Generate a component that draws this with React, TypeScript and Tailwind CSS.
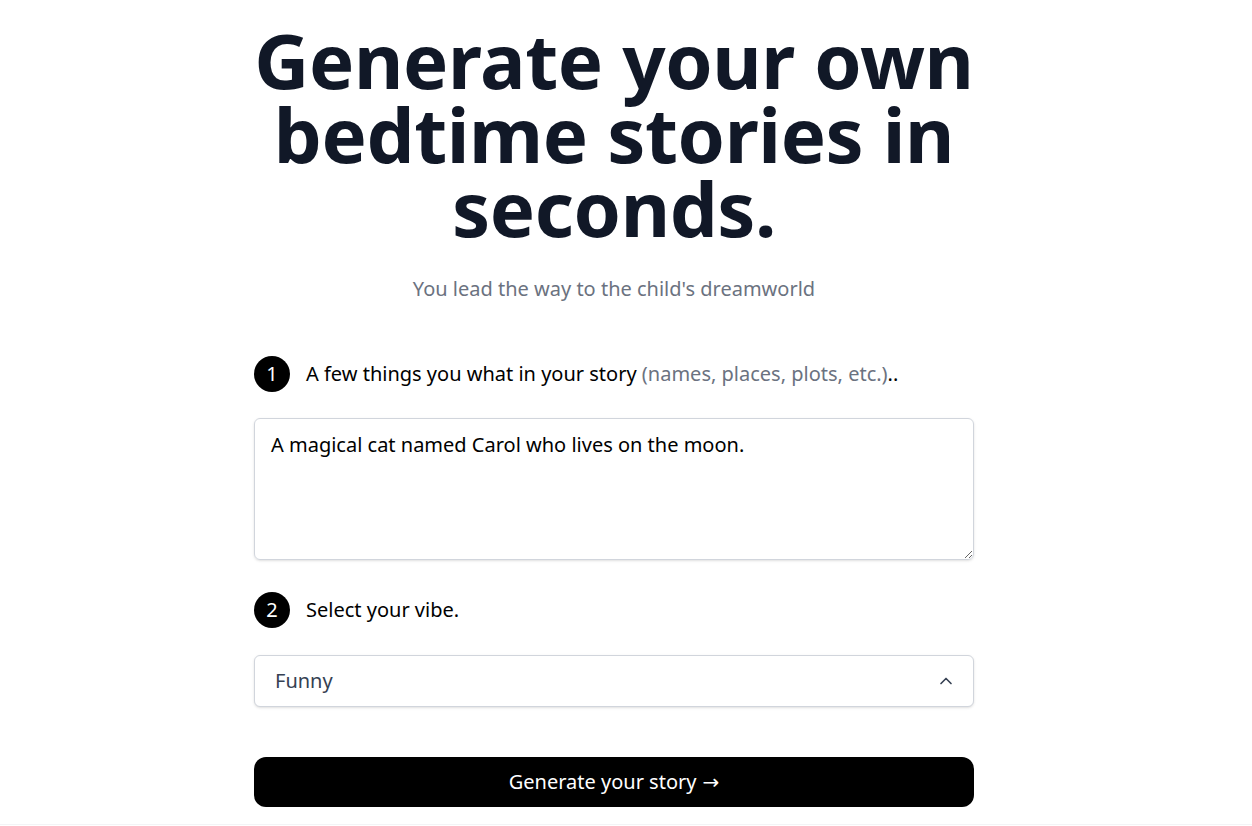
import { ChevronUp } from 'lucide-react'

const font = { fontFamily: '"Noto Sans", "Open Sans", sans-serif' }

function Step({ n, children }: { n: number; children: React.ReactNode }) {
    return (
        <div className="flex items-center gap-4">
            <div className="flex h-9 w-9 shrink-0 items-center justify-center rounded-full bg-black text-xl text-white">
                {n}
            </div>
            <p className="text-xl text-black">{children}</p>
        </div>
    )
}

export default function App() {
    return (
        <div className="min-h-screen bg-white" style={font}>
            <div className="pr-6">
                <main className="mx-auto flex w-[720px] flex-col items-center pt-[23px]">
                    {/*title*/}
                    <h1 className="text-center text-[76px] font-bold leading-[74px] tracking-[-0.005em] text-[#111827]">
                        Generate your own bedtime stories in seconds.
                    </h1>
                    <p className="mt-[30px] text-xl text-[#6b7280]">You lead the way to the child's dreamworld</p>

                    {/*form*/}
                    <div className="mt-[53px] w-full">
                        <Step n={1}>
                            A few things you what in your story{' '}
                            <span className="text-[#6b7280]">(names, places, plots, etc.)</span>..
                        </Step>
                        <textarea
                            rows={4}
                            defaultValue="A magical cat named Carol who lives on the moon."
                            className="mt-[26px] block h-[142px] w-full rounded-md border border-gray-300 px-4 pt-3 pb-2 text-xl text-black shadow-sm outline-none"
                        />

                        <div className="mt-8">
                            <Step n={2}>Select your vibe.</Step>
                        </div>
                        <div className="mt-[27px] flex h-[52px] w-full items-center justify-between rounded-md border border-gray-300 bg-white pl-5 pr-[17px] shadow-sm">
                            <span className="text-xl text-gray-700">Funny</span>
                            <ChevronUp className="h-5 w-5 text-gray-700" strokeWidth={2} />
                        </div>

                        <button className="mt-[50px] flex h-[50px] w-full items-center justify-center gap-1.5 rounded-xl bg-black text-xl text-white">
                            Generate your story
                            <span style={{ fontFamily: '"DejaVu Sans", sans-serif' }}>&rarr;</span>
                        </button>
                    </div>
                </main>
            </div>
            <div className="mt-[17px] border-t border-gray-100" />
        </div>
    )
}
